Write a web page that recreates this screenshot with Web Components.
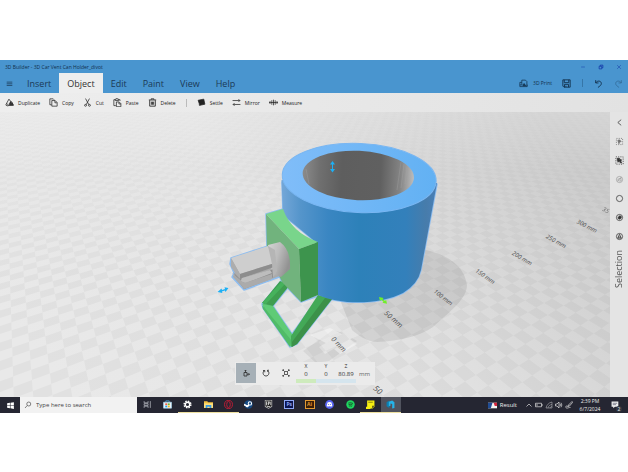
<!DOCTYPE html>
<html lang="en">
<head>
<meta charset="utf-8">
<title>3D Builder</title>
<style>
html,body{margin:0;background:#fff}
body{font-family:"Open Sans","Noto Sans",sans-serif;color:#222}
</style>
</head>
<body>
<app-window></app-window>
<script>
const ICONS={
menu:'<path d="M3 5.500h10M3 8.500h10M3 11.500h10"/>',
duplicate:'<path d="M7 2L2 11h4M7 2l3 4"/><path d="M1 12c2 2.500 5 2 6 1M10 6l-3 7h8L12 7z" stroke-width="1.600"/><path d="M10 7l4 5H9z" fill="currentColor"/>',
copy:'<path d="M4.500 12H1.500V1.500h6L9 3M5 4.500h6l3.500 3.500v6.500H5zM10.500 5v3.500H14"/>',
cut:'<path d="M4.500 1l6 11M11.500 1L5.500 12"/><circle cx="4.500" cy="13" r="1.700"/><circle cx="11.500" cy="13" r="1.700"/>',
paste:'<path d="M5 13.500H1.500V3H4M10 3h2.500v2M4 4.500V2h2c0-2 2-2 2 0h2v2.500zM6 7h5l3 3v5.500H6zM10.500 7.500v3H14"/>',
trash:'<path d="M1.500 3.500h13M5.500 3V1.500h5V3M3 4v10.500h10V4M6 6.500v5.500M8 6.500v5.500M10 6.500v5.500" stroke-width="1.500"/>',
settle:'<path d="M2 4l10-2 2 9-9 2z" fill="currentColor"/><path d="M3 12l2 2" stroke-width="1"/>',
mirror:'<path d="M1 4.500h13M11.500 2L14 4.500 11.500 7M15 11.500H2M4.500 9L2 11.500 4.500 14"/>',
measure:'<path d="M0 8h16M2.500 5.500L0 8l2.500 2.500M13.500 5.500L16 8l-2.500 2.500M5 4v8M8 3v10M11 4v8"/>',
print:'<path d="M5 6H1.500v7.500h13V10M1.500 10.500h5M5 10V2h6.500l2.500 2.500V13"/><path d="M7 12l2-4 3 4z" fill="currentColor"/>',
save:'<path d="M1.500 1.500h13v13h-11l-2-2zM4 1.500v5h8v-5M4.500 14.500v-5h7v5M7 12v2" stroke-width="1.600"/>',
undo:'<path d="M3 2v5h5M3 7c3-5 10-4 10 1 0 3-3 5-6 7" stroke-width="1.600"/>',
redo:'<path d="M13 2v5H8M13 7C10 2 3 3 3 8c0 3 3 5 6 7"/>',
back:'<path d="M11 3L5 8l6 5"/>',
group:'<rect x="2.500" y="2.500" width="11" height="11" stroke-dasharray="2 2"/><path d="M5 6l3-1 3 3-3 1-1 3-1-3z" fill="currentColor"/>',
groupsel:'<rect x="1.500" y="1.500" width="13" height="13" stroke-dasharray="2 2"/><path d="M4 4h4v2h3v3h-1l2 3H9L8 9l-3 2V8H4z" fill="currentColor"/>',
ring:'<circle cx="8" cy="8" r="5.500"/><path d="M5 8l5-3 1 5-3 1zM4 11l8-7"/>',
circle:'<circle cx="8" cy="8" r="5.500"/>',
target:'<circle cx="8" cy="8" r="5.500"/><path d="M5 9l3-4 3 1v3l-3 2z" fill="currentColor"/>',
letter:'<circle cx="8" cy="8" r="5.500"/><path d="M5 11l3-7 3 7zM5 9h6"/>',
move:'<path d="M4 7h6v7H4zM7 7V2M5.500 3.500L7 2l1.500 1.500M10 10.500h5M13 9l2 1.500-2 1.500" stroke-width="1.700"/>',
rotate:'<path d="M5 3C0 6 2 14 8 14s8-8 3-11M2 3h3.500v3.500M14 2.500h-3v3" stroke-width="1.700"/>',
scale:'<path d="M5 5h6v6H5zM5 5L2 2M11 5l3-3M5 11l-3 3M11 11l3 3M1.500 4V1.500H4M12 1.500h2.500V4M1.500 12v2.500H4M12 14.500h2.500V12" stroke-width="1.500"/>',
min:'<path d="M3 8h10"/>',
max:'<path d="M3 6h7v7H3zM6 6V3h7v7h-3" stroke-width="2"/>',
close:'<path d="M3 3l10 10M13 3L3 13"/>',
win:'<path d="M2 4l5-1v4.500H2zM8 3l6-1v5.500H8zM2 8.500h5V13l-5-1zM8 8.500h6V14l-6-1z" fill="#fff" stroke="none"/>',
search:'<circle cx="9.500" cy="6" r="4"/><path d="M6.500 9L2 14"/>',
taskview:'<path d="M2 2v3h7V2M2 14v-3h7v3M2 6.500h7v3H2zM13 2v12" stroke="#b8bac2"/>',
store:'<path d="M1 4h14v10.500H1z" fill="#eef5fa" stroke="#a8d4ec"/><path d="M5 3.500V1.500h6v2" stroke="#55b5e8"/><path d="M4 6h3.500v3.200H4z" fill="#ef5b40" stroke="none"/><path d="M8.500 6H12v3.200H8.500z" fill="#76b82a" stroke="none"/><path d="M4 10h3.500v3H4z" fill="#1ba4e8" stroke="none"/><path d="M8.500 10H12v3H8.500z" fill="#f8b81c" stroke="none"/>',
gear:'<circle cx="8" cy="8" r="6" stroke="#fff" stroke-width="2.500" stroke-dasharray="2.700 2"/><circle cx="8" cy="8" r="4" stroke="#fff" stroke-width="2.600"/>',
folder:'<path d="M0 2h6l1 2h9v10H0z" fill="#f4c142" stroke="none"/><path d="M0 6h16v8H0z" fill="#ffdf7c" stroke="none"/><path d="M3 14V9h10v5h-3v-2H6v2z" fill="#3b9be0" stroke="none"/>',
opera:'<ellipse cx="8" cy="8" rx="7" ry="7.200" stroke="#c91c36" stroke-width="1.600"/><ellipse cx="8" cy="8" rx="3.200" ry="5.500" stroke="#c91c36" stroke-width="1.600"/>',
steam:'<circle cx="8" cy="8" r="7.500" fill="#164a83" stroke="none"/><circle cx="10.500" cy="6" r="3" fill="#164a83" stroke="#fff" stroke-width="1.800"/><path d="M0 8l6 3 3-2" stroke="#fff" stroke-width="3"/><circle cx="5.500" cy="11" r="2" fill="#fff" stroke="none"/>',
epic:'<path d="M1.500 0h13v12L8 15.500 1.500 12z" fill="#cfcfcf" stroke="none"/><path d="M2.500 1h11v10l-5.500 3-5.500-3z" fill="#222" stroke="none"/><path d="M6 3H4.500v6H6M4.500 6H6M8 9V3h1.500v3H8M12 3v6M5 11.500h6" stroke="#eee"/>',
discord:'<circle cx="8" cy="8" r="7.800" fill="#5865f2" stroke="none"/><path d="M4.500 4.500Q8 3 11.500 4.500L13 10.500l-2.500 1.500-1-1h-3l-1 1L3 10.500z" fill="#fff" stroke="none"/><circle cx="6.300" cy="8" r="1" fill="#5865f2" stroke="none"/><circle cx="9.700" cy="8" r="1" fill="#5865f2" stroke="none"/>',
spotify:'<circle cx="8" cy="8" r="7.500" fill="#1ed760" stroke="none"/><path d="M4 5.500q4.500-1.500 8.500.700M4.500 8.200q4-1.200 7 .600M5 10.800q3-1 5.500.400" stroke="#16351f"/>',
notes:'<path d="M2 1h13v10l-3 4H2z" fill="#f7ee12" stroke="none"/><path d="M15 10h-4v5" fill="#4d4a13" stroke="none"/><path d="M4 4h8" stroke="#6b660f"/><path d="M0 12h8v4H0z" fill="#f7ee12" stroke="none"/>',
builder:'<path d="M1 4l5-3v13l-5-3z" fill="#0c7fb2" stroke="none"/><path d="M5 3l6-2 4 3v10l-4 1V7L8 6v4l-3 1z" fill="#25b3e8" stroke="none"/>',
flag:'<path d="M0 3h16v10H0z" fill="#f2f2f2" stroke="none"/><path d="M0 3h8l-3 10H0z" fill="#204c94" stroke="none"/><path d="M10 3h6v6h-4z" fill="#d3263e" stroke="none"/>',
up:'<path d="M3 11l5-5 5 5"/>',
battery:'<path d="M1 4.500h12v7H1zM14.500 6.500v3M4 6v4"/>',
wifi:'<path d="M2 14C3 8 8 3 14 2v12zM6 14c0-3 4-7 8-7M10 14c0-1 2-3 4-3" opacity=".6"/>',
sound:'<path d="M1 6h3l4-4v12l-4-4H1zM10 5.500q2 2.500 0 5M12 3.500q3.500 4.500 0 9"/>',
pen:'<path d="M14 1L7 8l-1 3 3-1 6-7zM6 11c-5-3-6 2-3 3s5-2 8-1"/>',
notif:'<path d="M1 1h12v9H7l-3 3v-3H1z" fill="#eee" stroke="none"/><path d="M3 4h8M3 6.500h6" stroke="#667"/>'
};
function make(tag,css,html,after){
  customElements.define(tag,class extends HTMLElement{
    connectedCallback(){
      if(this.shadowRoot)return;
      const r=this.attachShadow({mode:'open'});
      r.innerHTML='<style>*{box-sizing:border-box}button{font:inherit;color:inherit;background:none;border:0;padding:0;margin:0}'+css+'</style>'+(typeof html==='function'?html(this):html);
      if(after)after(r,this);
    }
  });
}
const ic=(n,extra='')=>`<ui-icon name="${n}" ${extra}></ui-icon>`;

make('ui-icon',':host{display:block;width:var(--icon,9px);height:var(--icon,9px);flex:none}svg{display:block;width:100%;height:100%}',
  h=>`<svg viewBox="0 0 16 16" fill="none" stroke="currentColor" stroke-width="1.300" aria-hidden="true">${ICONS[h.getAttribute('name')]}</svg>`);

make('title-bar',`:host{display:flex;align-items:center;height:13px;background:#4995cf;color:#12304c;font-size:5px;padding-left:5px}
span{flex:1}button{width:18px;height:13px;display:grid;place-items:center;--icon:6px;color:#1236a8}`,
`<span>3D Builder - 3D Car Vent Can Holder_divot</span><button aria-label="Minimize">${ic('min')}</button><button aria-label="Restore">${ic('max')}</button><button aria-label="Close">${ic('close')}</button>`);

make('menu-bar',`:host{display:flex;align-items:stretch;height:20px;background:#4995cf;color:#1b3956;font-size:9px}
button{display:flex;align-items:center}.menu{width:19px;justify-content:center;--icon:9px}
nav{display:flex;flex:1}nav button{padding:0 8px}nav .on{background:#eee;color:#333}
.right{display:flex;align-items:center;--icon:9px;font-size:5px;color:#12304c}.right button{height:20px}
.print{gap:5px;margin-right:10px}i{width:1px;height:8px;background:#3676a8;margin:0 11px}.redo{opacity:.45;margin:0 5px 0 11px}`,
`<button class="menu" aria-label="Menu">${ic('menu')}</button><nav><button>Insert</button><button class="on">Object</button><button>Edit</button><button>Paint</button><button>View</button><button>Help</button></nav>
<div class="right"><button class="print">${ic('print')}3D Print</button><button aria-label="Save">${ic('save')}</button><i></i><button aria-label="Undo">${ic('undo')}</button><button class="redo" aria-label="Redo">${ic('redo')}</button></div>`);

make('tool-bar',`:host{display:flex;align-items:center;gap:9px;height:19px;background:linear-gradient(90deg,#eee,#e2e2e2);padding-left:5px;font-size:5px;color:#222}
button{display:flex;align-items:center;gap:4px;height:19px}i{width:1px;height:8px;background:#bbb;margin:0 1px}`,
['duplicate:Duplicate','copy:Copy','cut:Cut','paste:Paste','trash:Delete','|','settle:Settle','mirror:Mirror','measure:Measure'].map(s=>{
  if(s==='|')return '<i></i>';const [a,b]=s.split(':');return `<button>${ic(a)}${b}</button>`}).join(''));

make('side-rail',`:host{display:flex;flex-direction:column;align-items:center;gap:9px;width:18px;padding-top:5px;background:#e4e4e4;color:#333;--icon:9px;font-size:9px}
button{height:10px;display:grid;place-items:center}.dim{opacity:.4}.mid{opacity:.65}
span{writing-mode:vertical-rl;transform:rotate(180deg);line-height:12px;color:#555}`,
`<button aria-label="Collapse">${ic('back')}</button><button class="mid" aria-label="Group">${ic('group')}</button><button aria-label="Select all">${ic('groupsel')}</button><button class="dim" aria-label="Deselect">${ic('ring')}</button><button aria-label="Select none">${ic('circle')}</button><button aria-label="Select object">${ic('target')}</button><button aria-label="Select by name">${ic('letter')}</button><span>Selection</span>`);

make('transform-panel',`:host{display:flex;align-items:stretch;height:23px;width:140px;background:rgba(236,236,236,.92);font-size:6px;color:#333}
button{width:20px;height:20px;margin-top:1px;display:grid;place-items:center;--icon:8px}.on{background:#a6b0b7;margin-left:1px}
label{width:20px;display:flex;flex-direction:column;align-items:center;font-size:5px;line-height:7px;padding-top:1px}
input{width:20px;height:8px;border:0;padding:0;background:none;text-align:center;font:6px/8px "Open Sans",sans-serif;color:#333}
label::after{content:"";width:20px;height:4px;margin-top:1px;background:#d5e5ee}label.x::after{background:#ceebbd}
span{align-self:center;margin-left:3px;color:#666}`,
`<button class="on" aria-label="Move">${ic('move')}</button><button aria-label="Rotate">${ic('rotate')}</button><button aria-label="Scale">${ic('scale')}</button>
<label class="x">X<input value="0"></label><label>Y<input value="0"></label><label>Z<input value="80.89"></label><span>mm</span>`);

// Floor grid: 10 mm cells projected towards two vanishing points.
function floorPath(){
  const O=[338,345],A=[1130,-32],B=[0,-32],wa=.01518,wb=.0235;
  const pt=(u,v)=>{const w=1+u*wa+v*wb;return w>.5?[(O[0]+A[0]*u*wa+B[0]*v*wb)/w,(O[1]+A[1]*u*wa+B[1]*v*wb)/w]:null};
  let d='';
  for(let u=-70;u<190;u++)for(let v=-80;v<130;v++){
    if((u+v)&1)continue;
    const c=[pt(u,v),pt(u+1,v),pt(u+1,v+1),pt(u,v+1)];
    if(c.some(p=>!p))continue;
    const [x,y]=c[0];
    if(x<-30||x>640||y<90||y>430)continue;
    d+='M'+c.map(p=>p[0].toFixed(1)+' '+p[1].toFixed(1)).join('L')+'z';
  }
  return d;
}
make('model-stage',`:host{display:block;position:relative;flex:1;min-width:0;overflow:hidden;background:#ddd}
svg{position:absolute;inset:0;width:100%;height:100%}transform-panel{position:absolute;left:50%;bottom:12px;transform:translateX(-50%)}
text{font:italic 6px "Noto Sans",sans-serif;fill:#555;text-anchor:middle}`,
`<svg viewBox="0 112 610 285" preserveAspectRatio="xMidYMid slice" role="img" aria-label="3D model of a vent can holder">
<defs>
<linearGradient id="bg" x1="0" y1=".7" x2="1" y2=".3"><stop offset="0" stop-color="#e9e9e9"/><stop offset=".5" stop-color="#e4e4e4"/><stop offset="1" stop-color="#cccccc"/></linearGradient>
<linearGradient id="hz" x1="0" y1="0" x2="0" y2="1"><stop offset="0" stop-color="#fff" stop-opacity=".2"/><stop offset="1" stop-color="#fff" stop-opacity="0"/></linearGradient>
<linearGradient id="fade" x1="0" y1="0" x2="0" y2="1"><stop offset="0" stop-color="#fff" stop-opacity=".3"/><stop offset=".6" stop-color="#fff"/></linearGradient>
<mask id="m"><rect y="112" width="610" height="285" fill="url(#fade)"/></mask>
<linearGradient id="body"><stop offset="0" stop-color="#74a7d8"/><stop offset=".12" stop-color="#5595cb"/><stop offset=".3" stop-color="#3a86c2"/><stop offset=".5" stop-color="#2d81b9"/><stop offset=".8" stop-color="#3380bb"/><stop offset=".93" stop-color="#477cab"/><stop offset="1" stop-color="#4a80b8"/></linearGradient>
<linearGradient id="rim"><stop offset="0" stop-color="#80bdf9"/><stop offset="1" stop-color="#62b1f3"/></linearGradient>
<linearGradient id="hole"><stop offset="0" stop-color="#8b8b8b"/><stop offset=".15" stop-color="#707070"/><stop offset=".35" stop-color="#5e5e5e"/><stop offset=".7" stop-color="#606060"/><stop offset=".88" stop-color="#858585"/><stop offset="1" stop-color="#bdbdbd"/></linearGradient>
<linearGradient id="peg" x1="0" y1="0" x2="1" y2=".5"><stop offset="0" stop-color="#d5d5d5"/><stop offset=".5" stop-color="#bcbcbc"/><stop offset="1" stop-color="#929292"/></linearGradient>
</defs>
<rect y="112" width="610" height="285" fill="url(#bg)"/>
<path id="floor" fill="#000" fill-opacity=".032" mask="url(#m)"/>
<rect y="112" width="610" height="60" fill="url(#hz)"/>
<path d="M415 248C440 251 464 262 467 285C467 298 453 309 433 327C420 336 400 341 377 342C365 341 358 335 352 330L340 300z" fill="#000" fill-opacity=".08"/>
<path d="M303 351L333 330L343 333L319 347L325 354L352 338L357 341L329 361L316 363z" fill="#000" fill-opacity=".06"/>
<path d="M310 335L330 328L342 334L326 343zM334 349L350 339L357 344L340 354z" fill="#fff" fill-opacity=".4"/>
<text transform="translate(337 346) rotate(46)" style="font-size:7px">0 mm</text>
<text transform="translate(392 321) rotate(41)" style="font-size:7px">50 mm</text>
<text transform="translate(442 299) rotate(38)">100 mm</text>
<text transform="translate(484 278) rotate(35)">150 mm</text>
<text transform="translate(521 260) rotate(31)">200 mm</text>
<text transform="translate(555 243) rotate(29)">250 mm</text>
<text transform="translate(586 228) rotate(27)">300 mm</text>
<text transform="translate(605 212) rotate(25)" opacity=".8">35</text>
<text transform="translate(376 392) rotate(42)" style="font-size:8px">50</text>
<g stroke="#8dbdf0" stroke-width="1.500" stroke-linejoin="round">
<path d="M282 280L262 304L263 308L290 347L297 344L332 299L321 294L292 334L273 306L290 285z" fill="#4fb768"/>
<path d="M282 182L283 215L318 244V295C343 306 382 304 403 293Q418 284 421 270L437 184z" fill="none"/>
<path d="M266 214L283 209L318 242V296L301 302L282 282L267 250z" fill="none"/>
<path d="M231 258L268 246L281 241L291 272L282 276L244 290L232 277L234 273L230 264z" fill="#aaa"/>
</g>
<path d="M280 281L262 303L273 306L289 286z" fill="#3f9e50"/><path d="M283 280L262 303L266 304L286 283z" fill="#46b25c"/>
<path d="M262 304L273 306L292 334L291 347z" fill="#5fcb76"/><path d="M262 305L263 309L290 347L292 341z" fill="#50bb68"/>
<path d="M318 295L332 299L297 344L291 347L291 336z" fill="#43a957"/><path d="M332 299L297 344L292 347V342L325 298z" fill="#3c9149"/>
<path d="M281.500 180L283 215L318 244V295C343 306 382 304 403 293Q418 284 421 270L437 183z" fill="url(#body)"/>
<path d="M266 214L283 209Q291 232 318 242L299 249z" fill="#79d58b"/>
<path d="M266 214L299 249L301 302L282 282L267 250z" fill="#71b37d"/>
<path d="M299 249L318 242V295L301 302z" fill="#3d944d"/>
<ellipse cx="359.200" cy="178" rx="77" ry="34.500" transform="rotate(2.500 359.200 178)" fill="url(#rim)" stroke="#79b6f2" stroke-width="1"/>
<ellipse cx="358.300" cy="175.500" rx="55.700" ry="24.700" transform="rotate(2.500 358.300 175.500)" fill="url(#hole)"/>
<path d="M401 162l-4 28M404 164l-3 24M407 167l-2 17M306 169l3 15" stroke="#a5a5a5" stroke-width="1" opacity=".35"/>
<path d="M268 245L280 242Q291 250 290 269L281 277L272 274z" fill="url(#peg)"/>
<path d="M231 258L268 246L275 263L240 274z" fill="#cecece"/>
<path d="M231 258L240 274V279L231 267z" fill="#adadad"/><path d="M240 274L275 263L274 267L240 279z" fill="#8d8d8d"/>
<path d="M233 272L240 279L274 269V277L244 289z" fill="#8d8d8d"/><path d="M240 282L242 278L270 270L272 273L246 283z" fill="#bdbdbd"/>
<path d="M232 273L242 286L244 289L272 279V274L244 283z" fill="#ababab"/><path d="M268 246L275 250L277 271L273 278L272 264z" fill="#b5b5b5"/>
<g fill="#1db0f5"><path d="M332.500 161l2.500 3.500h-2v4.500h2l-2.500 3.500-2.500-3.500h2v-4.500h-2z"/><path d="M217.500 292l4-3.500.500 1.500 3-1-.5-1.700 4 .700-3 4-.600-1.500-3 1 .5 1.500z"/></g>
<path d="M379 297l4.500 1-.900 1.200 2.500 1.800 1-1.200.900 4-4.500-1 1-1-2.500-2-1 1.400z" fill="#70ef28"/>
</svg><transform-panel></transform-panel>`,
r=>r.getElementById('floor').setAttribute('d',floorPath()));

make('adobe-tile',':host{display:grid;place-items:center;width:10px;height:9px;border:1px solid var(--c);background:var(--b);color:var(--c);font:bold 5px/7px "Open Sans",sans-serif}','<slot></slot>');

make('task-bar',`:host{display:flex;height:16px;background:#252632;color:#eee;font-size:5px;--icon:9px}
button{display:grid;place-items:center}.start{width:20px}
.search{width:117px;background:#f2f2f2;color:#444;display:flex;align-items:center;gap:4px;padding-left:4px;--icon:8px}
input{flex:1;min-width:0;border:0;padding:0;background:none;font:6px/10px "Open Sans",sans-serif}input::placeholder{color:#444;opacity:1}
.apps{display:grid;grid-template-columns:repeat(13,1fr);width:264px}.apps button{border-bottom:1px solid transparent}.apps .run{border-color:#eee0a0}.apps .on{background:#50535e}
.tray{margin-left:auto;display:flex;align-items:center;padding-right:8px}.result{display:flex;align-items:center;gap:3px;font-size:6px;margin-right:8px}
.sys{display:flex;gap:2px;--icon:8px;margin-right:5px}time{text-align:center;line-height:8px;width:24px;margin-right:9px;white-space:nowrap}
.n{position:relative}.n b{position:absolute;right:-2px;bottom:-2px;width:6px;height:6px;border-radius:3px;background:#333640;font:5px/6px "Open Sans",sans-serif}`,
`<button class="start" aria-label="Start">${ic('win')}</button><label class="search">${ic('search')}<input placeholder="Type here to search" aria-label="Type here to search"></label>
<div class="apps">${[['taskview',''],['store',''],['gear','run'],['folder','run'],['opera','run'],['steam',''],['epic',''],['Ps',''],['Ai',''],['discord',''],['spotify',''],['notes','run'],['builder','run on']].map(([n,c])=>`<button class="${c}" aria-label="${n}">${n==='Ps'?'<adobe-tile style="--c:#8fa8f5;--b:#0b1550">Ps</adobe-tile>':n==='Ai'?'<adobe-tile style="--c:#e39a32;--b:#3a1e06">Ai</adobe-tile>':ic(n)}</button>`).join('')}</div>
<div class="tray"><button class="result">${ic('flag')}Result</button><div class="sys">${['up','battery','wifi','sound','pen'].map(n=>`<button aria-label="${n}">${ic(n)}</button>`).join('')}</div><time>2:39 PM<br>6/7/2024</time><button class="n" aria-label="Notifications">${ic('notif')}<b>2</b></button></div>`);

make('app-window',`:host{display:flex;flex-direction:column;min-height:100vh;padding:60px 0 59px;box-sizing:border-box;background:#fff}main{display:flex;flex:1;min-height:240px}`,
`<title-bar></title-bar><menu-bar></menu-bar><tool-bar></tool-bar><main><model-stage></model-stage><side-rail></side-rail></main><task-bar></task-bar>`);
</script>
</body>
</html>
